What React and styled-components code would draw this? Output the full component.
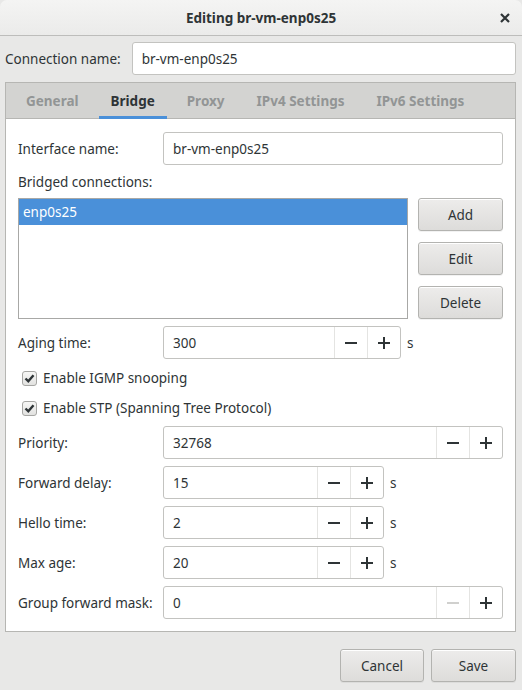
import React from "react";
import styled, { createGlobalStyle } from "styled-components";

const Global = createGlobalStyle`
  html, body { margin: 0; padding: 0; background: #e8e8e7; }
  body {
    font-family: "Noto Sans", "Open Sans", sans-serif;
    font-size: 13.5px;
    color: #2e3436;
  }
  * { box-sizing: border-box; }
`;

const Window = styled.div`
  width: 522px;
  height: 690px;
  display: flex;
  flex-direction: column;
  background: #e8e8e7;
`;

const TitleBar = styled.div`
  height: 36px;
  flex: none;
  display: flex;
  align-items: center;
  justify-content: center;
  position: relative;
  background: linear-gradient(#f4f4f3, #ebebea);
  border-bottom: 1px solid #bdbdbb;
  border-radius: 7px 7px 0 0;
  font-weight: bold;
  font-size: 13.5px;
  color: #2e3436;
`;

const CloseBtn = styled.div`
  position: absolute;
  right: 11px;
  top: 12px;
  width: 12px;
  height: 12px;
  display: flex;
`;

const Content = styled.div`
  flex: 1;
  display: flex;
  flex-direction: column;
  padding: 6px 6px 0 5px;
`;

const TopRow = styled.div`
  display: flex;
  align-items: center;
  gap: 11px;
`;

const Label = styled.span`
  white-space: nowrap;
  color: #2e3436;
`;

const Entry = styled.div`
  flex: 1;
  height: 33px;
  display: flex;
  align-items: center;
  padding: 0 9px;
  background: #fff;
  border: 1px solid #c3c3c0;
  border-radius: 3px;
  color: #2e3436;
`;

const Notebook = styled.div`
  margin-top: 7px;
  border: 1px solid #b6b6b3;
  background: #fff;
  display: flex;
  flex-direction: column;
`;

const TabBar = styled.div`
  height: 36px;
  display: flex;
  align-items: stretch;
  gap: 8px;
  padding-left: 8px;
  background: #d3d3d1;
  border-bottom: 1px solid #b6b6b3;
`;

const Tab = styled.div`
  display: flex;
  align-items: center;
  padding: 0 12px;
  font-weight: bold;
  color: ${(p) => (p.$active ? "#2e3436" : "#929595")};
  border-bottom: 3px solid ${(p) => (p.$active ? "#4a90d9" : "transparent")};
  padding-top: 3px;
  margin-bottom: -1px;
`;

const Page = styled.div`
  display: flex;
  flex-direction: column;
  padding: 13px 12px 12px 12px;
`;

const FormRow = styled.div`
  display: grid;
  grid-template-columns: 145px 1fr;
  align-items: center;
  margin-top: ${(p) => p.$mt || 0}px;
`;

const FieldLine = styled.div`
  display: flex;
  align-items: center;
  gap: 6px;
`;

const SectionLabel = styled.div`
  height: 33px;
  display: flex;
  align-items: center;
`;

const ListArea = styled.div`
  display: flex;
  gap: 10px;
  height: 121px;
`;

const ListBox = styled.div`
  flex: 1;
  border: 1px solid #a8a8a6;
  background: #fff;
`;

const ListItem = styled.div`
  height: 26px;
  display: flex;
  align-items: center;
  padding-left: 4px;
  background: ${(p) => (p.$selected ? "#4a90d9" : "transparent")};
  color: ${(p) => (p.$selected ? "#fff" : "#2e3436")};
`;

const ButtonColumn = styled.div`
  width: 85px;
  display: flex;
  flex-direction: column;
  gap: 11px;
`;

const Button = styled.div`
  height: 33px;
  width: ${(p) => p.$w || "auto"};
  display: flex;
  align-items: center;
  justify-content: center;
  border: 1px solid #b3b3b0;
  border-radius: 3px;
  background: linear-gradient(#edeceb, #dddcda);
  box-shadow: inset 0 1px #fff, 0 1px rgba(0, 0, 0, 0.05);
  color: #2e3436;
`;

const Spin = styled.div`
  height: 33px;
  width: ${(p) => p.$w || "100%"};
  display: flex;
  background: #fff;
  border: 1px solid #c3c3c0;
  border-radius: 3px;
`;

const SpinText = styled.div`
  flex: 1;
  display: flex;
  align-items: center;
  padding-left: 9px;
`;

const SpinBtn = styled.div`
  width: 33px;
  display: flex;
  align-items: center;
  justify-content: center;
  border-left: 1px solid #e4e4e2;
`;

const Unit = styled.span`
  color: #2e3436;
`;

const CheckRow = styled.div`
  height: 30px;
  display: flex;
  align-items: center;
  gap: 6px;
  padding-left: 4px;
  margin-top: ${(p) => p.$mt || 0}px;
`;

const Box = styled.div`
  width: 15px;
  height: 15px;
  border: 1px solid #a6a6a3;
  border-radius: 3px;
  background: linear-gradient(#f6f6f5, #e2e2e0);
  display: flex;
  align-items: center;
  justify-content: center;
`;

const Footer = styled.div`
  display: flex;
  justify-content: flex-end;
  gap: 7px;
  margin-top: 17px;
`;

const Minus = ({ disabled }) => (
  <svg width="12" height="12" viewBox="0 0 12 12">
    <rect x="0" y="5" width="12" height="2" fill={disabled ? "#d0d0ce" : "#2e3436"} />
  </svg>
);

const Plus = () => (
  <svg width="12" height="12" viewBox="0 0 12 12">
    <rect x="0" y="5" width="12" height="2" fill="#2e3436" />
    <rect x="5" y="0" width="2" height="12" fill="#2e3436" />
  </svg>
);

const Check = () => (
  <svg width="11" height="11" viewBox="0 0 11 11">
    <path d="M1.5 5.5 L4.3 8.3 L9.5 2.2" fill="none" stroke="#2e3436" strokeWidth="2.4" />
  </svg>
);

function SpinField({ value, w, unit, minusDisabled }) {
  return (
    <FieldLine>
      <Spin $w={w}>
        <SpinText>{value}</SpinText>
        <SpinBtn>
          <Minus disabled={minusDisabled} />
        </SpinBtn>
        <SpinBtn>
          <Plus />
        </SpinBtn>
      </Spin>
      {unit && <Unit>{unit}</Unit>}
    </FieldLine>
  );
}

const tabs = ["General", "Bridge", "Proxy", "IPv4 Settings", "IPv6 Settings"];

export default function App() {
  return (
    <>
      <Global />
      <Window>
        <TitleBar>
          Editing br-vm-enp0s25
          <CloseBtn>
            <svg width="12" height="12" viewBox="0 0 12 12">
              <path d="M2 2 L10 10 M10 2 L2 10" stroke="#2e3436" strokeWidth="2.2" />
            </svg>
          </CloseBtn>
        </TitleBar>
        <Content>
          <TopRow>
            <Label>Connection name:</Label>
            <Entry>br-vm-enp0s25</Entry>
          </TopRow>
          <Notebook>
            <TabBar>
              {tabs.map((t) => (
                <Tab key={t} $active={t === "Bridge"}>
                  {t}
                </Tab>
              ))}
            </TabBar>
            <Page>
              <FormRow>
                <Label>Interface name:</Label>
                <Entry>br-vm-enp0s25</Entry>
              </FormRow>
              <SectionLabel>Bridged connections:</SectionLabel>
              <ListArea>
                <ListBox>
                  <ListItem $selected>enp0s25</ListItem>
                </ListBox>
                <ButtonColumn>
                  <Button>Add</Button>
                  <Button>Edit</Button>
                  <Button>Delete</Button>
                </ButtonColumn>
              </ListArea>
              <FormRow $mt={7}>
                <Label>Aging time:</Label>
                <SpinField value="300" w="238px" unit="s" />
              </FormRow>
              <CheckRow $mt={4}>
                <Box>
                  <Check />
                </Box>
                Enable IGMP snooping
              </CheckRow>
              <CheckRow>
                <Box>
                  <Check />
                </Box>
                Enable STP (Spanning Tree Protocol)
              </CheckRow>
              <FormRow $mt={3}>
                <Label>Priority:</Label>
                <SpinField value="32768" />
              </FormRow>
              <FormRow $mt={7}>
                <Label>Forward delay:</Label>
                <SpinField value="15" w="221px" unit="s" />
              </FormRow>
              <FormRow $mt={7}>
                <Label>Hello time:</Label>
                <SpinField value="2" w="221px" unit="s" />
              </FormRow>
              <FormRow $mt={7}>
                <Label>Max age:</Label>
                <SpinField value="20" w="221px" unit="s" />
              </FormRow>
              <FormRow $mt={7}>
                <Label>Group forward mask:</Label>
                <SpinField value="0" minusDisabled />
              </FormRow>
            </Page>
          </Notebook>
          <Footer>
            <Button $w="84px">Cancel</Button>
            <Button $w="85px">Save</Button>
          </Footer>
        </Content>
      </Window>
    </>
  );
}
